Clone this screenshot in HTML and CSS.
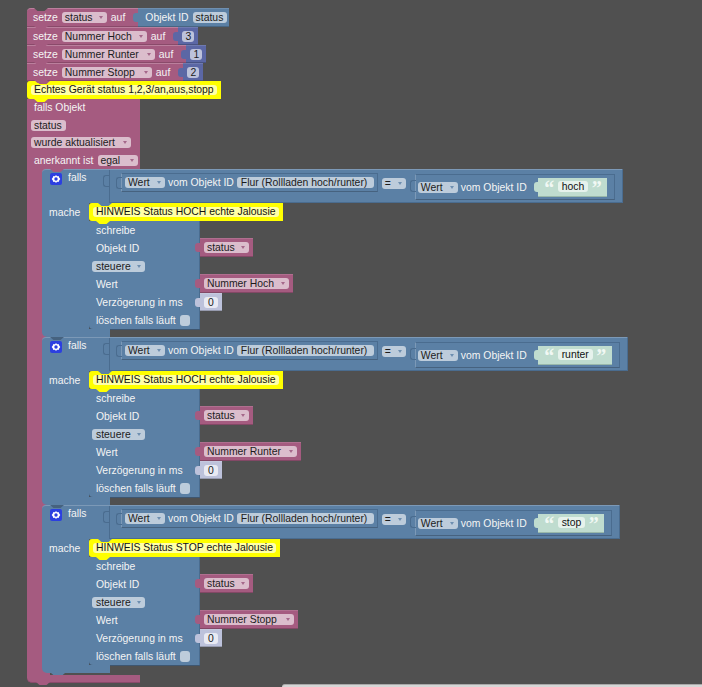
FILE: index.html
```html
<!DOCTYPE html>
<html lang="de">
<head>
<meta charset="utf-8">
<title>Blockly</title>
<link rel="stylesheet" href="styles.css">
</head>
<body>
<main class="canvas">
  <section class="program">
    <div class="set-row first">
      <div class="set-body"><span class="lbl">setze</span><span class="pill pink-pill w45">status<i class="arr"></i></span><span class="lbl">auf</span></div>
      <div class="val objid"><span class="lbl">Objekt ID</span><span class="pill blue-pill">status</span></div>
    </div>
    <div class="set-row">
      <div class="set-body"><span class="lbl">setze</span><span class="pill pink-pill w85">Nummer Hoch<i class="arr"></i></span><span class="lbl">auf</span></div>
      <div class="val num"><span class="pill num-pill">3</span></div>
    </div>
    <div class="set-row">
      <div class="set-body"><span class="lbl">setze</span><span class="pill pink-pill w93">Nummer Runter<i class="arr"></i></span><span class="lbl">auf</span></div>
      <div class="val num"><span class="pill num-pill">1</span></div>
    </div>
    <div class="set-row">
      <div class="set-body"><span class="lbl">setze</span><span class="pill pink-pill w90">Nummer Stopp<i class="arr"></i></span><span class="lbl">auf</span></div>
      <div class="val num"><span class="pill num-pill">2</span></div>
    </div>
    <div class="comment on-pink"><span class="comment-text">Echtes Gerät status 1,2,3/an,aus,stopp</span></div>

    <div class="trigger">
      <div class="tr-rows">
        <div class="tr-row"><span class="lbl">falls Objekt</span></div>
        <div class="tr-row"><span class="pill pink-pill">status</span></div>
        <div class="tr-row"><span class="pill pink-pill w100">wurde aktualisiert<i class="arr"></i></span></div>
        <div class="tr-row"><span class="lbl">anerkannt ist</span><span class="pill pink-pill w40">egal<i class="arr"></i></span></div>
      </div>
      <div class="tr-body">
        <div class="tr-left"></div>
        <div class="falls-stack">

          <div class="falls">
            <div class="falls-head">
              <div class="head-left">
                <svg class="gear" viewBox="0 0 12 12"><rect width="12" height="12" rx="2" fill="#2b3fe0"/><path d="M6 2l1 1.3 1.6-.2.6 1.5L10.300 6l-1.100 1.400-.6 1.500-1.600-.2L6 10l-1-1.300-1.600.2-.6-1.500L1.700 6l1.100-1.400.6-1.500 1.600.2z" fill="#fff"/><circle cx="6" cy="6" r="1.700" fill="#2b3fe0"/></svg>
                <span class="lbl falls-word">falls</span>
              </div>
              <div class="cmp-box">
                <span class="pill blue-pill w40">Wert<i class="arr"></i></span><span class="lbl">vom Objekt ID</span><span class="pill blue-pill w137">Flur (Rollladen hoch/runter)</span>
              </div>
              <span class="pill blue-pill op">=<i class="arr"></i></span>
              <div class="cmp-box right">
                <span class="pill blue-pill w40">Wert<i class="arr"></i></span><span class="lbl">vom Objekt ID</span>
                <div class="str"><span class="q">“</span><span class="str-pill">hoch</span><span class="q">”</span></div>
              </div>
            </div>
            <div class="falls-body">
              <div class="mache-col"><span class="lbl">mache</span></div>
              <div class="stmts">
                <div class="comment"><span class="comment-text">HINWEIS Status HOCH echte Jalousie</span></div>
                <div class="srow"><div class="cell"><span class="lbl">schreibe</span></div></div>
                <div class="srow"><div class="cell"><span class="lbl">Objekt ID</span></div><div class="val var"><span class="pill pink-pill w45">status<i class="arr"></i></span></div></div>
                <div class="srow"><div class="cell tight"><span class="pill blue-pill w53">steuere<i class="arr"></i></span></div></div>
                <div class="srow"><div class="cell"><span class="lbl">Wert</span></div><div class="val var"><span class="pill pink-pill w85">Nummer Hoch<i class="arr"></i></span></div></div>
                <div class="srow"><div class="cell"><span class="lbl">Verzögerung in ms</span></div><div class="val zero"><span class="pill zero-pill">0</span></div></div>
                <div class="srow"><div class="cell last"><span class="lbl">löschen falls läuft</span><span class="check"></span></div></div>
              </div>
            </div>
            <div class="falls-foot"></div>
          </div>

          <div class="falls">
            <div class="falls-head">
              <div class="head-left">
                <svg class="gear" viewBox="0 0 12 12"><rect width="12" height="12" rx="2" fill="#2b3fe0"/><path d="M6 2l1 1.3 1.6-.2.6 1.5L10.300 6l-1.100 1.400-.6 1.500-1.600-.2L6 10l-1-1.300-1.600.2-.6-1.500L1.700 6l1.100-1.400.6-1.500 1.600.2z" fill="#fff"/><circle cx="6" cy="6" r="1.700" fill="#2b3fe0"/></svg>
                <span class="lbl falls-word">falls</span>
              </div>
              <div class="cmp-box">
                <span class="pill blue-pill w40">Wert<i class="arr"></i></span><span class="lbl">vom Objekt ID</span><span class="pill blue-pill w137">Flur (Rollladen hoch/runter)</span>
              </div>
              <span class="pill blue-pill op">=<i class="arr"></i></span>
              <div class="cmp-box right">
                <span class="pill blue-pill w40">Wert<i class="arr"></i></span><span class="lbl">vom Objekt ID</span>
                <div class="str"><span class="q">“</span><span class="str-pill">runter</span><span class="q">”</span></div>
              </div>
            </div>
            <div class="falls-body">
              <div class="mache-col"><span class="lbl">mache</span></div>
              <div class="stmts">
                <div class="comment"><span class="comment-text">HINWEIS Status HOCH echte Jalousie</span></div>
                <div class="srow"><div class="cell"><span class="lbl">schreibe</span></div></div>
                <div class="srow"><div class="cell"><span class="lbl">Objekt ID</span></div><div class="val var"><span class="pill pink-pill w45">status<i class="arr"></i></span></div></div>
                <div class="srow"><div class="cell tight"><span class="pill blue-pill w53">steuere<i class="arr"></i></span></div></div>
                <div class="srow"><div class="cell"><span class="lbl">Wert</span></div><div class="val var"><span class="pill pink-pill w93">Nummer Runter<i class="arr"></i></span></div></div>
                <div class="srow"><div class="cell"><span class="lbl">Verzögerung in ms</span></div><div class="val zero"><span class="pill zero-pill">0</span></div></div>
                <div class="srow"><div class="cell last"><span class="lbl">löschen falls läuft</span><span class="check"></span></div></div>
              </div>
            </div>
            <div class="falls-foot"></div>
          </div>

          <div class="falls">
            <div class="falls-head">
              <div class="head-left">
                <svg class="gear" viewBox="0 0 12 12"><rect width="12" height="12" rx="2" fill="#2b3fe0"/><path d="M6 2l1 1.3 1.6-.2.6 1.5L10.300 6l-1.100 1.400-.6 1.500-1.600-.2L6 10l-1-1.300-1.600.2-.6-1.500L1.700 6l1.100-1.400.6-1.500 1.600.2z" fill="#fff"/><circle cx="6" cy="6" r="1.700" fill="#2b3fe0"/></svg>
                <span class="lbl falls-word">falls</span>
              </div>
              <div class="cmp-box">
                <span class="pill blue-pill w40">Wert<i class="arr"></i></span><span class="lbl">vom Objekt ID</span><span class="pill blue-pill w137">Flur (Rollladen hoch/runter)</span>
              </div>
              <span class="pill blue-pill op">=<i class="arr"></i></span>
              <div class="cmp-box right">
                <span class="pill blue-pill w40">Wert<i class="arr"></i></span><span class="lbl">vom Objekt ID</span>
                <div class="str"><span class="q">“</span><span class="str-pill">stop</span><span class="q">”</span></div>
              </div>
            </div>
            <div class="falls-body">
              <div class="mache-col"><span class="lbl">mache</span></div>
              <div class="stmts">
                <div class="comment"><span class="comment-text">HINWEIS Status STOP echte Jalousie</span></div>
                <div class="srow"><div class="cell"><span class="lbl">schreibe</span></div></div>
                <div class="srow"><div class="cell"><span class="lbl">Objekt ID</span></div><div class="val var"><span class="pill pink-pill w45">status<i class="arr"></i></span></div></div>
                <div class="srow"><div class="cell tight"><span class="pill blue-pill w53">steuere<i class="arr"></i></span></div></div>
                <div class="srow"><div class="cell"><span class="lbl">Wert</span></div><div class="val var"><span class="pill pink-pill w90">Nummer Stopp<i class="arr"></i></span></div></div>
                <div class="srow"><div class="cell"><span class="lbl">Verzögerung in ms</span></div><div class="val zero"><span class="pill zero-pill">0</span></div></div>
                <div class="srow"><div class="cell last"><span class="lbl">löschen falls läuft</span><span class="check"></span></div></div>
              </div>
            </div>
            <div class="falls-foot"></div>
          </div>

        </div>
      </div>
      <div class="tr-foot"></div>
    </div>
  </section>
  <div class="scroll-strip"></div>
</main>
</body>
</html>
```
FILE: styles.css
```css
* { box-sizing: border-box; }
html, body { margin: 0; padding: 0; }
body { background: #505050; }

.canvas {
  position: relative;
  width: 702px;
  height: 687px;
  overflow: hidden;
  padding: 8px 0 0 27px;
  font: 10.4px/11px "Liberation Sans", Arial, sans-serif;
  color: #f4f4f4;
  background: #505050;
}

.program { display: flex; flex-direction: column; align-items: flex-start; }

.lbl { white-space: nowrap; color: #f4f4f4; }

/* Editable fields */
.pill {
  display: inline-flex;
  align-items: center;
  justify-content: space-between;
  height: 11px;
  padding: 0 4px 0 3px;
  border-radius: 3px;
  color: #1c1c1c;
  white-space: nowrap;
  flex: none;
}
.pink-pill { background: #dbbdcc; }
.blue-pill { background: #bdccdb; }
.num-pill { background: #bdc2db; width: 12px; justify-content: center; padding: 0; }
.zero-pill { background: #e9eaf3; width: 14px; justify-content: center; padding: 0; }
.w40 { width: 40px; }
.w45 { width: 45px; }
.w53 { width: 53px; padding-left: 4px; }
.w85 { width: 85px; }
.w90 { width: 90px; }
.w93 { width: 93px; }
.w100 { width: 100px; }
.w137 { width: 137px; padding: 0 4px; }

.arr {
  flex: none;
  width: 0;
  height: 0;
  margin-left: 4px;
  border: 2.5px solid transparent;
  border-top: 3px solid #a5688a;
  border-bottom: 0;
}
.blue-pill .arr { border-top-color: #6e8fb0; }

/* Value blocks plugged into an input */
.val {
  position: relative;
  display: flex;
  align-items: center;
  height: 18px;
  padding: 0 4px;
  flex: none;
  border-bottom: 1px solid rgba(0, 0, 0, .2);
  border-top: 1px solid rgba(255, 255, 255, .12);
}
.val::before {
  content: "";
  position: absolute;
  left: -5px;
  top: 4px;
  width: 5px;
  height: 9px;
  border-radius: 3px 0 0 3px;
  background: inherit;
}
.objid { background: #5b80a5; gap: 4px; width: 91px; padding-left: 7px; }
.num { background: #5b67a5; }
.var { background: #a55b80; height: 19px; margin-top: -1px; }
.zero { background: #bdc2db; width: 22px; }

/* Variable setters */
.set-row { display: flex; height: 18px; position: relative; }
.set-body {
  display: flex;
  align-items: center;
  gap: 4px;
  height: 18px;
  padding: 0 13px 0 6px;
  background: #a55b80;
  border-top: 1px solid #bb7f9d;
  border-bottom: 1px solid #8a4a6a;
  position: relative;
}
.set-body::after {
  content: "";
  position: absolute;
  left: 7px;
  bottom: -3px;
  width: 14px;
  height: 3px;
  background: #a55b80;
  clip-path: polygon(0 0, 100% 0, 75% 100%, 25% 100%);
  z-index: 1;
}
.first { height: 19px; }
.first .set-body { height: 19px; border-radius: 4px 0 0 0; }
.first .val { height: 19px; }
.first .set-body::before {
  content: "";
  position: absolute;
  left: 7px;
  top: -1px;
  width: 14px;
  height: 3px;
  background: #505050;
  clip-path: polygon(0 0, 100% 0, 75% 100%, 25% 100%);
}

/* Yellow comment */
.comment {
  position: relative;
  display: flex;
  align-items: center;
  height: 18px;
  padding: 0 4px;
  background: #ffff00;
  border-radius: 3px 0 0 3px;
  flex: none;
  align-self: flex-start;
}
.comment::before {
  content: "";
  position: absolute;
  left: 9px;
  top: 0;
  width: 14px;
  height: 3px;
  background: #5b80a5;
  clip-path: polygon(0 0, 100% 0, 75% 100%, 25% 100%);
}
.comment::after {
  content: "";
  position: absolute;
  left: 7px;
  bottom: -3px;
  width: 14px;
  height: 3px;
  background: #ffff00;
  clip-path: polygon(0 0, 100% 0, 75% 100%, 25% 100%);
  z-index: 2;
}
.on-pink::before { background: #a55b80; }
.comment-text {
  height: 10px;
  line-height: 10px;
  padding: 0 3px;
  background: #ffffa8;
  color: #111;
  border-radius: 3px;
  white-space: nowrap;
}

/* Trigger block */
.trigger { display: flex; flex-direction: column; align-items: flex-start; }
.tr-rows { width: 113px; background: #a55b80; }
.tr-row {
  display: flex;
  align-items: center;
  gap: 4px;
  height: 17.5px;
  padding-left: 4px;
}
.tr-row .lbl { margin-left: 3px; }
.tr-body { display: flex; }
.tr-left { width: 15px; background: #a55b80; flex: none; }
.falls-stack {
  display: flex;
  flex-direction: column;
  align-items: flex-start;
  padding-bottom: 2px;
  background: linear-gradient(to right, #a55b80 8px, transparent 8px);
}
.tr-foot {
  position: relative;
  width: 113px;
  height: 8px;
  background: #a55b80;
  border-radius: 0 0 0 5px;
  border-bottom: 1px solid #8a4a6a;
}
.tr-foot::after {
  content: "";
  position: absolute;
  left: 9px;
  bottom: -3px;
  width: 14px;
  height: 3px;
  background: #a55b80;
  clip-path: polygon(0 0, 100% 0, 75% 100%, 25% 100%);
}

/* Conditional block */
.falls { display: flex; flex-direction: column; align-items: flex-start; height: 168px; }
.falls-head {
  position: relative;
  display: flex;
  align-items: flex-start;
  height: 34px;
  padding-right: 7px;
  background: #5b80a5;
  border-radius: 4px 0 0 0;
  border-top: 1px solid #7c99b7;
  border-right: 1px solid #4a6c8f;
}
.falls-head::before {
  content: "";
  position: absolute;
  left: 8px;
  top: -1px;
  width: 14px;
  height: 3px;
  background: #46627f;
  clip-path: polygon(0 0, 100% 0, 75% 100%, 25% 100%);
}
.falls-head::after {
  content: "";
  position: absolute;
  left: 68px;
  right: 0;
  bottom: 0;
  height: 1px;
  background: #4a6c8f;
}
.falls:first-child .falls-head::before { background: #a55b80; }
.head-left {
  position: relative;
  display: flex;
  align-items: center;
  gap: 6px;
  width: 68px;
  height: 33px;
  padding: 0 0 15px 8px;
  border-right: 1px solid #4a6c8f;
  flex: none;
}
.head-left::after {
  content: "";
  position: absolute;
  right: 0;
  top: 5px;
  width: 5px;
  height: 10px;
  border: 1px solid #4a6c8f;
  border-right: 0;
  border-radius: 3px 0 0 3px;
}
.gear { width: 12px; height: 12px; flex: none; }
.falls-word { margin-top: -3px; }

.cmp-box {
  position: relative;
  display: flex;
  align-items: center;
  gap: 3px;
  height: 19px;
  margin: 3px 0 0 11px;
  padding: 0 3px;
  background: #5b80a5;
  border: 1px solid #4a6c8f;
  border-left-color: #7c99b7;
  border-bottom-color: #46627f;
  flex: none;
}
.cmp-box::before {
  content: "";
  position: absolute;
  left: -6px;
  top: 3px;
  width: 5px;
  height: 10px;
  border: 1px solid #4a6c8f;
  border-right: 0;
  border-radius: 3px 0 0 3px;
}
.op { width: 24px; margin: 8px 0 0 4px; }
.right { height: 26px; margin: 4px 0 0 9px; padding: 0 7px 0 2px; }
.right::before { top: 5px; }

.str {
  position: relative;
  display: flex;
  align-items: center;
  gap: 2px;
  height: 19px;
  margin-left: 8px;
  padding: 0 4px 0 5px;
  background: #bfdccf;
  border-bottom: 1px solid #99b8aa;
}
.str::before {
  content: "";
  position: absolute;
  left: -4px;
  top: 4px;
  width: 4px;
  height: 10px;
  border-radius: 3px 0 0 3px;
  background: #bfdccf;
}
.q {
  align-self: flex-start;
  width: 13px;
  font: bold 20px/20px "Liberation Serif", serif;
  color: #f1f8f4;
  text-align: center;
}
.str-pill {
  height: 11px;
  padding: 0 4px;
  border-radius: 3px;
  background: #e6f2ec;
  color: #111;
}

.falls-body { display: flex; align-items: stretch; }
.mache-col {
  width: 47px;
  padding: 4px 0 0 7px;
  background: #5b80a5;
  flex: none;
}
.stmts { display: flex; flex-direction: column; align-items: flex-start; }
.srow { display: flex; height: 18px; }
.cell {
  display: flex;
  align-items: center;
  gap: 4px;
  width: 111px;
  height: 18px;
  padding-left: 7px;
  background: #5b80a5;
  border-right: 1px solid #4a6c8f;
  flex: none;
}
.tight { padding-left: 3px; }
.last {
  height: 18px;
  border-radius: 0 0 0 4px;
  box-shadow: 0 1px 0 #3e5670;
}
.check {
  width: 10px;
  height: 11px;
  border-radius: 3px;
  background: #bdccdb;
  flex: none;
}
.falls-foot {
  position: relative;
  width: 68px;
  height: 8px;
  background: #5b80a5;
  border-radius: 0 0 0 5px;
}
.falls-foot::after {
  content: "";
  position: absolute;
  left: 9px;
  bottom: -3px;
  width: 14px;
  height: 3px;
  background: #5b80a5;
  clip-path: polygon(0 0, 100% 0, 75% 100%, 25% 100%);
}

.scroll-strip {
  position: absolute;
  left: 282px;
  top: 684px;
  right: 0;
  height: 3px;
  background: #d6d6d6;
  border-top: 1px solid #a9a9a9;
  border-radius: 3px 0 0 0;
}
```
